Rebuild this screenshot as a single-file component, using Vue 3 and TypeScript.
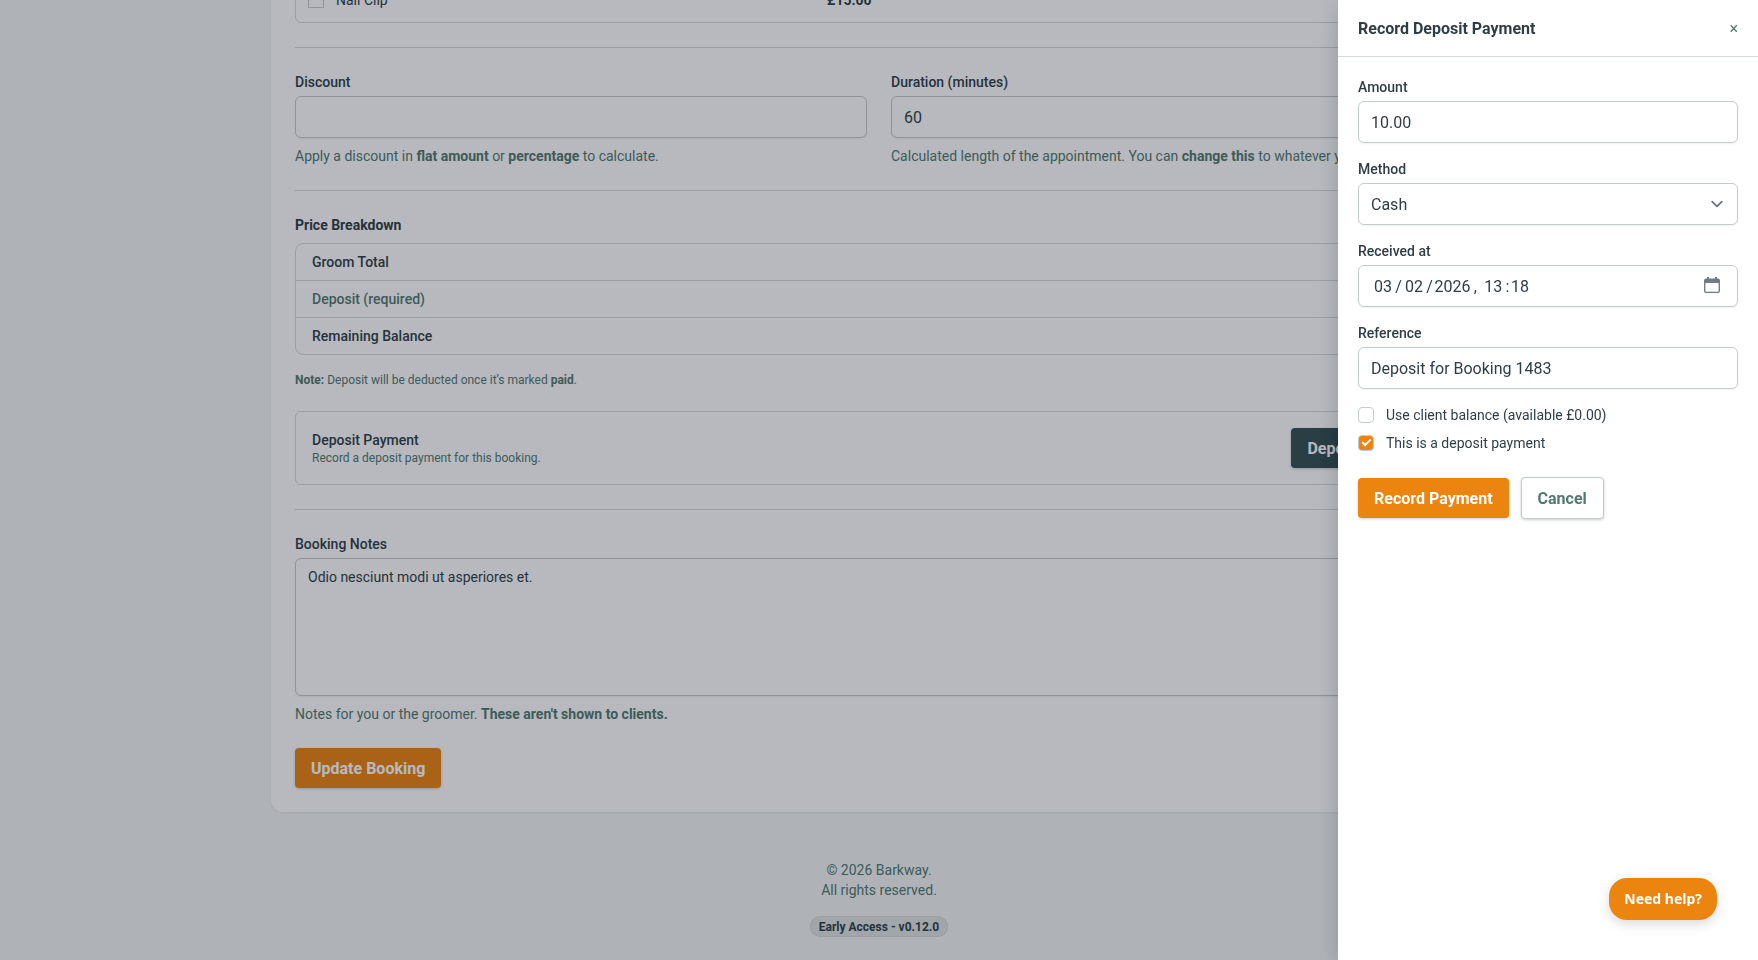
<script setup lang="ts">
import { ref } from 'vue'

interface BreakdownRow {
  label: string
  muted?: boolean
}

const breakdown: BreakdownRow[] = [
  { label: 'Groom Total' },
  { label: 'Deposit (required)', muted: true },
  { label: 'Remaining Balance' },
]

const nailClip = ref(false)
const discount = ref('')
const duration = ref('60')
const notes = ref('Odio nesciunt modi ut asperiores et.')

const amount = ref('10.00')
const method = ref('Cash')
const receivedAt = ref('03\u2009/\u200902\u2009/\u200a2026\u2009,\u2009 13\u2009:\u200a18')
const reference = ref('Deposit for Booking 1483')
const useBalance = ref(false)
const isDeposit = ref(true)
</script>

<template>
  <div class="page">
    <main class="card">
      <div class="service">
        <label class="check">
          <input v-model="nailClip" type="checkbox" class="square" />
          <span>Nail Clip</span>
        </label>
        <strong>£15.00</strong>
      </div>

      <hr />

      <div class="columns">
        <div class="field">
          <label for="discount">Discount</label>
          <input id="discount" v-model="discount" type="text" />
          <p class="hint">Apply a discount in <b>flat amount</b> or <b>percentage</b> to calculate.</p>
        </div>
        <div class="field">
          <label for="duration">Duration (minutes)</label>
          <input id="duration" v-model="duration" type="text" />
          <p class="hint">
            Calculated length of the appointment. You can <b>change this</b> to whatever you like.
          </p>
        </div>
      </div>

      <hr />

      <section>
        <h2>Price Breakdown</h2>
        <ul class="breakdown">
          <li v-for="row in breakdown" :key="row.label" :class="{ muted: row.muted }">{{ row.label }}</li>
        </ul>
        <p class="note"><b>Note:</b> Deposit will be deducted once it’s marked <b>paid</b>.</p>
      </section>

      <section class="deposit">
        <div>
          <h3>Deposit Payment</h3>
          <p>Record a deposit payment for this booking.</p>
        </div>
        <button type="button" class="btn dark">Deposit Payment</button>
      </section>

      <hr />

      <div class="field">
        <label for="notes">Booking Notes</label>
        <textarea id="notes" v-model="notes" rows="6"></textarea>
        <p class="hint">Notes for you or the groomer. <b>These aren't shown to clients.</b></p>
      </div>

      <button type="button" class="btn primary update">Update Booking</button>
    </main>

    <footer class="footer">
      <p>© 2026 Barkway.<br />All rights reserved.</p>
      <span class="badge">Early Access - v0.12.0</span>
    </footer>
  </div>

  <div class="backdrop"></div>

  <aside class="drawer" role="dialog" aria-labelledby="drawer-title">
    <header class="drawer-head">
      <h1 id="drawer-title">Record Deposit Payment</h1>
      <button type="button" class="close" aria-label="Close">×</button>
    </header>
    <form class="drawer-body" @submit.prevent>
      <div class="field">
        <label for="amount">Amount</label>
        <input id="amount" v-model="amount" type="text" />
      </div>
      <div class="field">
        <label for="method">Method</label>
        <div class="control">
          <select id="method" v-model="method">
            <option>Cash</option>
            <option>Card</option>
          </select>
          <svg class="chevron" viewBox="0 0 20 20" fill="none" stroke="#6b7280" stroke-width="1.5" stroke-linecap="round" stroke-linejoin="round">
            <path d="M6 8l4 4 4-4" />
          </svg>
        </div>
      </div>
      <div class="field">
        <label for="received">Received at</label>
        <div class="control">
          <input id="received" v-model="receivedAt" type="text" class="datetime" />
          <svg class="calendar" viewBox="0 0 16 16">
            <path fill="#727b83" fill-rule="evenodd" d="M3 0h2v1.4h6V0h2v1.4h1A2 2 0 0 1 16 3.4V14a2 2 0 0 1-2 2H2a2 2 0 0 1-2-2V3.4a2 2 0 0 1 2-2h1zM1.4 6v8c0 .4.3.7.7.7h11.800c.4 0 .7-.3.7-.7V6z" />
          </svg>
        </div>
      </div>
      <div class="field">
        <label for="reference">Reference</label>
        <input id="reference" v-model="reference" type="text" />
      </div>
      <div class="checks">
        <label class="check">
          <input v-model="useBalance" type="checkbox" />
          <span>Use client balance (available £0.00)</span>
        </label>
        <label class="check">
          <input v-model="isDeposit" type="checkbox" />
          <span>This is a deposit payment</span>
        </label>
      </div>
      <div class="actions">
        <button type="submit" class="btn primary">Record Payment</button>
        <button type="button" class="btn outline">Cancel</button>
      </div>
    </form>
  </aside>

  <button type="button" class="help"><span>Need help?</span></button>
</template>

<style>
body {
  margin: 0;
}
#app {
  font-family: Roboto, "Liberation Sans", sans-serif;
  font-size: 14px;
  line-height: 20px;
  color: #2f3e46;
}
</style>

<style scoped>
* {
  box-sizing: border-box;
}
h1, h2, h3, p {
  margin: 0;
}
input, select, textarea, button {
  margin: 0;
  font-family: inherit;
  color: inherit;
}
b, strong {
  font-weight: 700;
}

/* The page rests at the end of its scroll range. */
.page {
  height: 100vh;
  overflow: hidden;
  display: flex;
  flex-direction: column;
  justify-content: flex-end;
  align-items: center;
  padding: 0 32px;
  background: #f4f7f6;
}
.card {
  flex: none;
  width: 100%;
  max-width: 1216px;
  padding: 24px;
  border-radius: 12px;
  background: #fff;
  box-shadow: 0 1px 3px rgba(0, 0, 0, 0.08);
}
hr {
  height: 1px;
  margin: 24px 0;
  border: 0;
  background: #d5dadb;
}
.service {
  display: grid;
  grid-template-columns: 5fr 6fr;
  align-items: center;
  height: 46px;
  padding: 0 12px;
  border: 1px solid #d5dadb;
  border-radius: 6px;
}
.columns {
  display: grid;
  grid-template-columns: 1fr 1fr;
  gap: 24px;
}
.field {
  display: flex;
  flex-direction: column;
}
.field > label {
  margin-bottom: 4px;
  font-weight: 500;
}
.field input, .field select, .field textarea {
  width: 100%;
  padding: 8px 12px;
  border: 1px solid #c4cbcb;
  border-radius: 6px;
  background: #fff;
  font-size: 16px;
  line-height: 24px;
  box-shadow: 0 1px 2px rgba(0, 0, 0, 0.06);
}
.field input, .field select {
  height: 42px;
  appearance: none;
}
.field select {
  padding: 9px 36px 7px 12px;
}
.field textarea {
  display: block;
  height: 138px;
  font-size: 14px;
  line-height: 20px;
  resize: none;
}
.hint {
  margin-top: 8px;
  white-space: nowrap;
  color: #52796f;
}
h2 {
  font-size: 14px;
  font-weight: 700;
}
.breakdown {
  margin: 8px 0 0;
  padding: 0;
  list-style: none;
  border: 1px solid #d5dadb;
  border-radius: 8px;
}
.breakdown li {
  padding: 8px 16px;
  font-weight: 500;
}
.breakdown li + li {
  border-top: 1px solid #d5dadb;
}
.breakdown .muted {
  color: #52796f;
}
.note {
  padding-top: 17px;
  font-size: 12px;
  line-height: 16px;
  color: #52796f;
}
.deposit {
  display: flex;
  align-items: center;
  justify-content: space-between;
  margin-top: 23px;
  padding: 16px;
  border: 1px solid #d5dadb;
  border-radius: 6px;
}
h3 {
  font-size: 14px;
  font-weight: 500;
}
.deposit p {
  font-size: 12px;
  line-height: 16px;
  color: #52796f;
}
.btn {
  padding: 9px 16px 7px;
  border: 0;
  border-radius: 4px;
  font-size: 16px;
  font-weight: 700;
  line-height: 24px;
  color: #fff;
  box-shadow: 0 1px 3px rgba(0, 0, 0, 0.2);
}
.primary {
  background: #ec850f;
}
.dark {
  background: #354f52;
}
.outline {
  border: 1px solid #c4cbcb;
  background: #fff;
  color: #52796f;
}
.update {
  display: block;
  margin-top: 24px;
}
.footer {
  display: flex;
  flex: none;
  flex-direction: column;
  align-items: center;
  gap: 16px;
  padding: 48px 0 23px;
  text-align: center;
  color: #52796f;
}
.badge {
  padding: 3px 9px 2px;
  border-radius: 12px;
  background: #dfe4e2;
  box-shadow: inset 0 0 0 1px #d5dadb;
  font-size: 12px;
  font-weight: 700;
  line-height: 16px;
  color: #2f3e46;
}
.backdrop {
  position: fixed;
  inset: 0;
  background: rgba(17, 24, 39, 0.3);
}
.drawer {
  position: fixed;
  inset: 0 0 0 auto;
  width: 420px;
  max-width: 100%;
  background: #fff;
  box-shadow: 0 20px 25px -5px rgba(0, 0, 0, 0.1), 0 0 20px rgba(0, 0, 0, 0.12);
}
.drawer-head {
  display: flex;
  align-items: center;
  justify-content: space-between;
  padding: 17px 20px 15px;
  border-bottom: 1px solid #d5dadb;
}
h1 {
  font-size: 16px;
  font-weight: 700;
  line-height: 24px;
}
.close {
  padding: 0;
  border: 0;
  background: none;
  font-size: 16px;
  line-height: 24px;
  color: #52796f;
}
.drawer-body {
  display: flex;
  flex-direction: column;
  gap: 16px;
  padding: 20px;
}
.control {
  position: relative;
}
.field .datetime {
  padding-left: 15px;
}
.chevron {
  position: absolute;
  top: 9px;
  right: 9px;
  width: 24px;
  height: 24px;
  pointer-events: none;
}
.calendar {
  position: absolute;
  top: 12px;
  right: 18px;
  width: 16px;
  height: 16px;
}
.checks {
  display: flex;
  flex-direction: column;
  gap: 8px;
}
.check {
  display: flex;
  align-items: center;
  gap: 12px;
}
.check input {
  appearance: none;
  display: grid;
  place-content: center;
  width: 16px;
  height: 16px;
  border: 1px solid #c4cbcb;
  border-radius: 4px;
  background: #fff;
}
.check .square {
  border-radius: 0;
}
.check input:checked {
  background: #ec850f;
}
.check input:checked::after {
  content: "";
  width: 9px;
  height: 5px;
  margin-bottom: 3px;
  box-sizing: border-box;
  border: solid #fff;
  border-width: 0 0 2px 2px;
  transform: rotate(-45deg);
}
.actions {
  display: flex;
  align-items: center;
  gap: 12px;
  margin-top: 8px;
}
.help {
  position: fixed;
  right: 41px;
  bottom: 40px;
  height: 42px;
  padding: 0 15px;
  border: 0;
  border-radius: 18px;
  background: #ec850f;
  color: #fff;
  font-family: "Noto Sans", sans-serif;
  font-size: 14px;
  font-weight: 700;
  box-shadow: 0 4px 12px rgba(0, 0, 0, 0.15);
}
.help span {
  display: block;
  overflow: hidden;
  line-height: 14px;
}
</style>
